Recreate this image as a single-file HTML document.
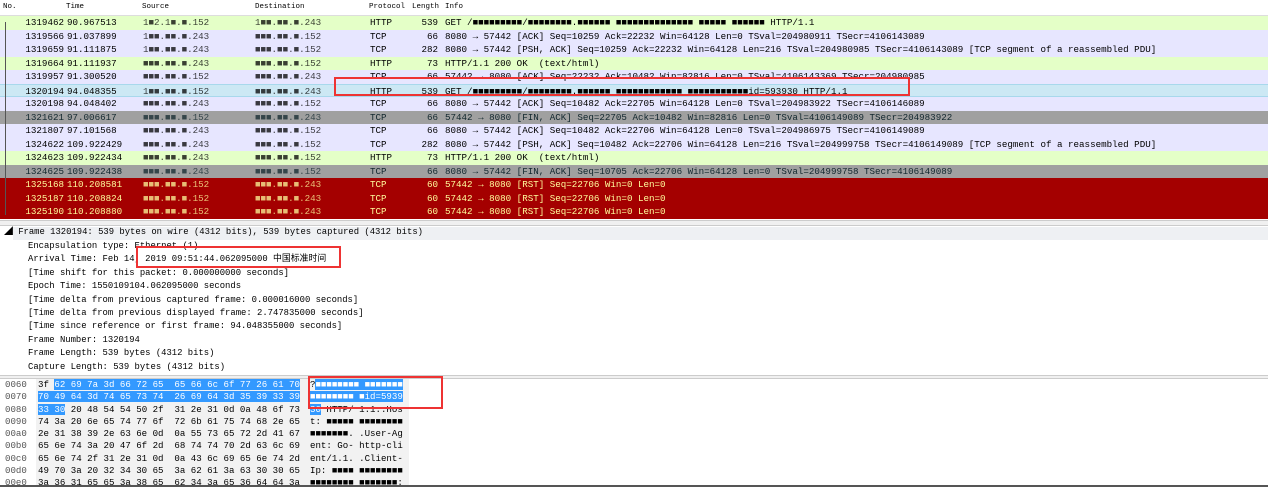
<!DOCTYPE html><html><head><meta charset="utf-8"><style>
body{margin:0;width:1268px;height:487px;overflow:hidden;background:#fff;font-family:"Liberation Mono","Noto Sans CJK SC",monospace;font-size:8.9px;color:#000;position:relative}
.r{position:absolute;left:0;width:1268px;height:13.5px;line-height:13.5px;white-space:pre;font-size:9.2px}
.r span{position:absolute}
.h{background:#e4ffc7}.t{background:#e7e6ff}.g{background:#a0a0a0;color:#12272e}.x{background:#a40000;color:#fffc9c}.s{background:#cce8f4;border-top:1px solid #a8d8ec;border-bottom:1px solid #a8d8ec;box-sizing:border-box}
.hd{position:absolute;top:0;left:0;width:1268px;height:15px;background:#fff;border-bottom:1px solid #ddd;font-size:7.5px;line-height:15px}
.hd span{position:absolute}
.d{position:absolute;left:0;white-space:pre;height:13.4px;line-height:13.4px}
.box{position:absolute;border:2px solid #e33;box-sizing:border-box}
.hx{position:absolute;white-space:pre;line-height:12.3px;left:0;font-size:9.1px}
.sel{background:#3399ff;color:#fff}
</style></head><body>
<div class="hd"><span style="left:3px">No.</span><span style="left:66px">Time</span><span style="left:142px">Source</span><span style="left:255px">Destination</span><span style="left:369px">Protocol</span><span style="left:412px">Length</span><span style="left:445px">Info</span></div>
<div id="rows"></div>
<div style="position:absolute;left:0;top:220px;width:1268px;height:6px;background:#f0f0f0;border-top:1px solid #ccc;border-bottom:1px solid #ccc;box-sizing:border-box"></div>
<div style="position:absolute;left:13px;top:227px;width:1255px;height:13px;background:#eef0f3"></div>
<div class="d" style="top:226px;left:4px">◢ Frame 1320194: 539 bytes on wire (4312 bits), 539 bytes captured (4312 bits)</div>
<div class="d" style="top:240px;left:28px">Encapsulation type: Ethernet (1)</div>
<div class="d" style="top:253px;left:28px">Arrival Time: Feb 14, 2019 09:51:44.062095000 中国标准时间</div>
<div class="d" style="top:267px;left:28px">[Time shift for this packet: 0.000000000 seconds]</div>
<div class="d" style="top:280px;left:28px">Epoch Time: 1550109104.062095000 seconds</div>
<div class="d" style="top:294px;left:28px">[Time delta from previous captured frame: 0.000016000 seconds]</div>
<div class="d" style="top:307px;left:28px">[Time delta from previous displayed frame: 2.747835000 seconds]</div>
<div class="d" style="top:320px;left:28px">[Time since reference or first frame: 94.048355000 seconds]</div>
<div class="d" style="top:334px;left:28px">Frame Number: 1320194</div>
<div class="d" style="top:347px;left:28px">Frame Length: 539 bytes (4312 bits)</div>
<div class="d" style="top:361px;left:28px">Capture Length: 539 bytes (4312 bits)</div>
<div style="position:absolute;left:0;top:375px;width:1268px;height:4px;background:#f0f0f0;border-top:1px solid #ccc;border-bottom:1px solid #ccc;box-sizing:border-box"></div>
<div style="position:absolute;left:36px;top:379px;width:373px;height:108px;background:#f2f2f2"></div>
<div id="hex"></div>
<div class="box" style="left:334px;top:77px;width:576px;height:19px"></div>
<div class="box" style="left:136px;top:246px;width:205px;height:22px"></div>
<div class="box" style="left:308px;top:376px;width:135px;height:33px"></div>
<div style="position:absolute;left:0;top:485px;width:1268px;height:2px;background:#555"></div>
<script>
var R=[["h","1319462","90.967513","1■2.1■.■.152","1■■.■■.■.243","HTTP","539","GET /■■■■■■■■■/■■■■■■■■.■■■■■■ ■■■■■■■■■■■■■■ ■■■■■ ■■■■■■ HTTP/1.1"],
["t","1319566","91.037899","1■■.■■.■.243","■■■.■■.■.152","TCP","66","8080 → 57442 [ACK] Seq=10259 Ack=22232 Win=64128 Len=0 TSval=204980911 TSecr=4106143089"],
["t","1319659","91.111875","1■■.■■.■.243","■■■.■■.■.152","TCP","282","8080 → 57442 [PSH, ACK] Seq=10259 Ack=22232 Win=64128 Len=216 TSval=204980985 TSecr=4106143089 [TCP segment of a reassembled PDU]"],
["h","1319664","91.111937","■■■.■■.■.243","■■■.■■.■.152","HTTP","73","HTTP/1.1 200 OK  (text/html)"],
["t","1319957","91.300520","■■■.■■.■.152","■■■.■■.■.243","TCP","66","57442 → 8080 [ACK] Seq=22232 Ack=10482 Win=82816 Len=0 TSval=4106143369 TSecr=204980985"],
["s","1320194","94.048355","1■■.■■.■.152","■■■.■■.■.243","HTTP","539","GET /■■■■■■■■■/■■■■■■■■.■■■■■■ ■■■■■■■■■■■■ ■■■■■■■■■■■id=593930 HTTP/1.1"],
["t","1320198","94.048402","■■■.■■.■.243","■■■.■■.■.152","TCP","66","8080 → 57442 [ACK] Seq=10482 Ack=22705 Win=64128 Len=0 TSval=204983922 TSecr=4106146089"],
["g","1321621","97.006617","■■■.■■.■.152","■■■.■■.■.243","TCP","66","57442 → 8080 [FIN, ACK] Seq=22705 Ack=10482 Win=82816 Len=0 TSval=4106149089 TSecr=204983922"],
["t","1321807","97.101568","■■■.■■.■.243","■■■.■■.■.152","TCP","66","8080 → 57442 [ACK] Seq=10482 Ack=22706 Win=64128 Len=0 TSval=204986975 TSecr=4106149089"],
["t","1324622","109.922429","■■■.■■.■.243","■■■.■■.■.152","TCP","282","8080 → 57442 [PSH, ACK] Seq=10482 Ack=22706 Win=64128 Len=216 TSval=204999758 TSecr=4106149089 [TCP segment of a reassembled PDU]"],
["h","1324623","109.922434","■■■.■■.■.243","■■■.■■.■.152","HTTP","73","HTTP/1.1 200 OK  (text/html)"],
["g","1324625","109.922438","■■■.■■.■.243","■■■.■■.■.152","TCP","66","8080 → 57442 [FIN, ACK] Seq=10705 Ack=22706 Win=64128 Len=0 TSval=204999758 TSecr=4106149089"],
["x","1325168","110.208581","■■■.■■.■.152","■■■.■■.■.243","TCP","60","57442 → 8080 [RST] Seq=22706 Win=0 Len=0"],
["x","1325187","110.208824","■■■.■■.■.152","■■■.■■.■.243","TCP","60","57442 → 8080 [RST] Seq=22706 Win=0 Len=0"],
["x","1325190","110.208880","■■■.■■.■.152","■■■.■■.■.243","TCP","60","57442 → 8080 [RST] Seq=22706 Win=0 Len=0"]];
var h="";R.forEach(function(r,i){var y=16+i*13.5;
h+='<div class="r '+r[0]+'" style="top:'+y+'px"><span style="right:1204px">'+r[1]+'</span><span style="left:67px">'+r[2]+'</span><span style="left:143px;opacity:.75">'+r[3]+'</span><span style="left:255px;opacity:.75">'+r[4]+'</span><span style="left:370px">'+r[5]+'</span><span style="right:830px">'+r[6]+'</span><span style="left:445px">'+r[7]+'</span></div>';});
document.getElementById("rows").innerHTML=h+'<div style="position:absolute;left:5px;top:22px;width:1px;height:193px;background:#555"></div>';
var H=[["0060",'3f <b class="sel">62 69 7a 3d 66 72 65  65 66 6c 6f 77 26 61 70</b>','?<b class="sel">■■■■■■■■ ■■■■■■■</b>'],
["0070",'<b class="sel">70 49 64 3d 74 65 73 74  26 69 64 3d 35 39 33 39</b>','<b class="sel">■■■■■■■■ ■id=5939</b>'],
["0080",'<b class="sel">33 30</b> 20 48 54 54 50 2f  31 2e 31 0d 0a 48 6f 73','<b class="sel">30</b> HTTP/ 1.1..Hos'],
["0090","74 3a 20 6e 65 74 77 6f  72 6b 61 75 74 68 2e 65","t: ■■■■■ ■■■■■■■■"],
["00a0","2e 31 38 39 2e 63 6e 0d  0a 55 73 65 72 2d 41 67","■■■■■■■. .User-Ag"],
["00b0","65 6e 74 3a 20 47 6f 2d  68 74 74 70 2d 63 6c 69","ent: Go- http-cli"],
["00c0","65 6e 74 2f 31 2e 31 0d  0a 43 6c 69 65 6e 74 2d","ent/1.1. .Client-"],
["00d0","49 70 3a 20 32 34 30 65  3a 62 61 3a 63 30 30 65","Ip: ■■■■ ■■■■■■■■"],
["00e0","3a 36 31 65 65 3a 38 65  62 34 3a 65 36 64 64 3a","■■■■■■■■ ■■■■■■■:"]];
var g="";H.forEach(function(r,i){var y=379+i*12.25;
g+='<div class="hx" style="top:'+y+'px;left:5px;color:#555">'+r[0]+'</div><div class="hx" style="top:'+y+'px;left:38px">'+r[1].replace(/<b/g,'<span').replace(/<\/b>/g,'</span>')+'</div><div class="hx" style="top:'+y+'px;left:310px">'+r[2].replace(/<b/g,'<span').replace(/<\/b>/g,'</span>')+'</div>';});
document.getElementById("hex").innerHTML=g;
</script>
</body></html>
